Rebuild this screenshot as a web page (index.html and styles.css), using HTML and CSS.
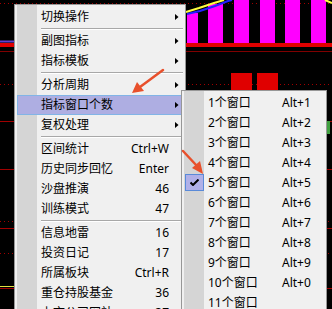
FILE: index.html
```html
<!DOCTYPE html>
<html lang="zh">
<head>
  <meta charset="UTF-8">
  <title>指标窗口个数</title>
  <link rel="stylesheet" href="styles.css">
</head>
<body>
<div class="screen">

  <!-- 背景K线图 -->
  <svg class="chart" width="332" height="309" viewBox="0 0 332 309">
    <line x1="0" y1="3.5" x2="332" y2="3.5" stroke="#a00000" stroke-dasharray="1 3"/>
    <rect x="187" y="13" width="11" height="31" fill="#ff00ff"/>
    <rect x="208" y="4" width="15" height="40" fill="#ff00ff"/>
    <rect x="234" y="0" width="15" height="44" fill="#ff00ff"/>
    <rect x="260" y="0" width="15" height="44" fill="#ff00ff"/>
    <rect x="285" y="0" width="15" height="44" fill="#ff00ff"/>
    <rect x="311" y="0" width="15" height="44" fill="#ff00ff"/>
    <polyline points="187,14 200,11 215,6 228,1 232,0" fill="none" stroke="#2020ff" stroke-width="2"/>
    <polyline points="186,12 199,8 214,3 224,0" fill="none" stroke="#ffff40" stroke-width="2"/>
    <line x1="325" y1="0" x2="332" y2="3" stroke="#ffff40" stroke-width="2"/>
    <line x1="0" y1="41.5" x2="14" y2="41.5" stroke="#6040d0" stroke-width="2"/>
    <rect x="0" y="43" width="332" height="4" fill="#e00000"/>
    <line x1="0" y1="51.5" x2="332" y2="51.5" stroke="#800000"/>
    <line x1="0" y1="84.5" x2="332" y2="84.5" stroke="#a00000" stroke-dasharray="1 3"/>
    <rect x="231" y="73" width="21" height="18" fill="#e00000"/>
    <rect x="257" y="73" width="21" height="18" fill="#e00000"/>
    <line x1="0" y1="121.5" x2="332" y2="121.5" stroke="#a00000"/>
    <rect x="327" y="121" width="3" height="13" fill="#40a040"/>
    <line x1="0" y1="169.5" x2="332" y2="169.5" stroke="#a00000"/>
    <line x1="0" y1="221.5" x2="332" y2="221.5" stroke="#a00000" stroke-dasharray="1 3"/>
    <line x1="0" y1="228.5" x2="332" y2="228.5" stroke="#a00000"/>
    <line x1="0" y1="253.5" x2="332" y2="253.5" stroke="#a00000" stroke-dasharray="1 3"/>
    <line x1="0" y1="286.5" x2="14" y2="286.5" stroke="#e0e040"/>
    <line x1="0" y1="288.5" x2="332" y2="288.5" stroke="#a00000"/>
  </svg>

  <div class="menu main-menu">
    <div class="item"><span class="label">切换操作</span><span class="key"></span><span class="sub"></span></div>
    <div class="sep"></div>
    <div class="item"><span class="label">副图指标</span><span class="key"></span><span class="sub"></span></div>
    <div class="item"><span class="label">指标模板</span><span class="key"></span><span class="sub"></span></div>
    <div class="sep"></div>
    <div class="item"><span class="label">分析周期</span><span class="key"></span><span class="sub"></span></div>
    <div class="item active"><span class="label">指标窗口个数</span><span class="key"></span><span class="sub"></span></div>
    <div class="item"><span class="label">复权处理</span><span class="key"></span><span class="sub"></span></div>
    <div class="sep"></div>
    <div class="item"><span class="label">区间统计</span><span class="key">Ctrl+W</span></div>
    <div class="item"><span class="label">历史同步回忆</span><span class="key">Enter</span></div>
    <div class="item"><span class="label">沙盘推演</span><span class="key">46</span></div>
    <div class="item"><span class="label">训练模式</span><span class="key">47</span></div>
    <div class="sep"></div>
    <div class="item"><span class="label">信息地雷</span><span class="key">16</span></div>
    <div class="item"><span class="label">投资日记</span><span class="key">17</span></div>
    <div class="item"><span class="label">所属板块</span><span class="key">Ctrl+R</span></div>
    <div class="item"><span class="label">重仓持股基金</span><span class="key">36</span></div>
    <div class="item"><span class="label">上市公司网站</span><span class="key">37</span></div>
  </div>

  <div class="menu sub-menu">
    <div class="row"><span class="mark"></span><span>1个窗口</span><span>Alt+1</span></div>
    <div class="row"><span class="mark"></span><span>2个窗口</span><span>Alt+2</span></div>
    <div class="row"><span class="mark"></span><span>3个窗口</span><span>Alt+3</span></div>
    <div class="row"><span class="mark"></span><span>4个窗口</span><span>Alt+4</span></div>
    <div class="row"><span class="mark checked">
      <svg width="9" height="7" viewBox="0 0 9 7"><path d="M0.5 3.5 L3 6 L8.5 0.5" fill="none" stroke="#000" stroke-width="2"/></svg>
    </span><span>5个窗口</span><span>Alt+5</span></div>
    <div class="row"><span class="mark"></span><span>6个窗口</span><span>Alt+6</span></div>
    <div class="row"><span class="mark"></span><span>7个窗口</span><span>Alt+7</span></div>
    <div class="row"><span class="mark"></span><span>8个窗口</span><span>Alt+8</span></div>
    <div class="row"><span class="mark"></span><span>9个窗口</span><span>Alt+9</span></div>
    <div class="row"><span class="mark"></span><span>10个窗口</span><span>Alt+0</span></div>
    <div class="row"><span class="mark"></span><span>11个窗口</span><span></span></div>
  </div>

  <!-- 标注箭头 -->
  <svg class="marks" width="332" height="309" viewBox="0 0 332 309">
    <line x1="163" y1="70" x2="140" y2="87" stroke="#e8502c" stroke-width="2.5" stroke-linecap="round"/>
    <polygon points="132,93 137,82 144,91" fill="#e8502c"/>
    <line x1="183" y1="151" x2="197" y2="166" stroke="#e8502c" stroke-width="2.5" stroke-linecap="round"/>
    <polygon points="203,174 192,168 200,161" fill="#e8502c"/>
  </svg>
</div>
</body>
</html>
```

FILE: styles.css
```css
body {
  margin: 0;
  background: #000;
  font-family: "Noto Sans", "Noto Sans CJK SC", sans-serif;
  font-size: 12px;
  color: #000;
}

.screen {
  position: relative;
  width: 332px;
  height: 309px;
  overflow: hidden;
  background: #000;
}

.chart,
.marks {
  position: absolute;
  left: 0;
  top: 0;
}

.menu {
  position: absolute;
  box-sizing: border-box;
  padding: 2px;
  border: 1px solid #979797;
  background: linear-gradient(90deg, transparent 2px, #d5d5d5 2px, #d5d5d5 22px, transparent 22px), #f0f0f0;
}

.main-menu {
  left: 14px;
  top: 4px;
  width: 172px;
  height: 330px;
}

.item {
  display: grid;
  grid-template-columns: 1fr auto 14px;
  align-items: center;
  height: 20px;
  line-height: 20px;
  padding-left: 24px;
  white-space: nowrap;
}

.item .key {
  text-align: right;
}

.item .sub {
  justify-self: center;
  margin-left: 1px;
}

.item .sub::after {
  content: "";
  display: block;
  width: 4px;
  height: 7px;
  background: #000;
  clip-path: polygon(0 0, 100% 50%, 0 100%);
}

.item.active {
  background: #aeaee2;
  box-shadow: inset 0 0 0 1px #82b4e6;
}

.sep {
  height: 1px;
  margin: 1px 0 1px 24px;
  background: #a8a8a8;
  border-bottom: 1px solid #fff;
}

.sub-menu {
  left: 181px;
  top: 90px;
  width: 146px;
  height: 240px;
}

.row {
  display: grid;
  grid-template-columns: 20px 70px auto;
  column-gap: 4px;
  height: 20px;
  line-height: 20px;
  white-space: nowrap;
}

.mark {
  display: flex;
  align-items: center;
  justify-content: center;
}

.mark.checked {
  margin: 1px 0 2px 1px;
  box-sizing: border-box;
  border: 1px solid #5a8ad8;
  background: #b0b0e8;
}

.mark svg {
  display: block;
}
```
